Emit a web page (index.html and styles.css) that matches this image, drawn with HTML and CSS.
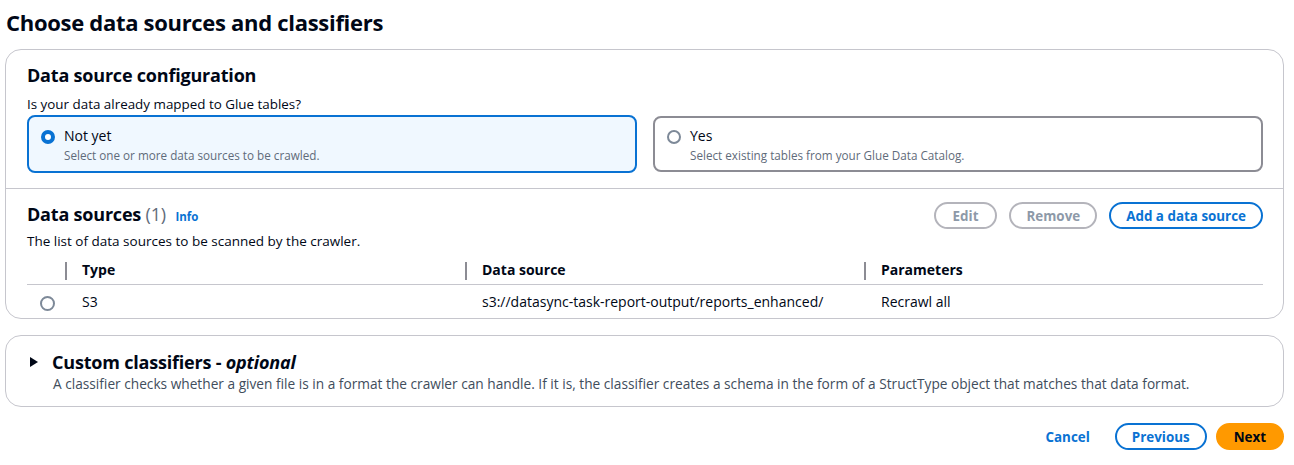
FILE: index.html
```html
<!DOCTYPE html>
<html lang="en">
<head>
  <meta charset="UTF-8" />
  <title>Choose data sources and classifiers</title>
  <link rel="stylesheet" href="styles.css">
</head>
<body>
<div class="page">
  <h1 class="page-title">Choose data sources and classifiers</h1>

  <div class="container">
    <div class="section">
      <h2>Data source configuration</h2>
      <div class="field-label">Is your data already mapped to Glue tables?</div>
      <div class="tiles">
        <div class="tile selected">
          <span class="radio checked"></span>
          <div>
            <div class="tile-title">Not yet</div>
            <div class="tile-desc">Select one or more data sources to be crawled.</div>
          </div>
        </div>
        <div class="tile">
          <span class="radio"></span>
          <div>
            <div class="tile-title">Yes</div>
            <div class="tile-desc">Select existing tables from your Glue Data Catalog.</div>
          </div>
        </div>
      </div>
    </div>

    <div class="section table-section">
      <div class="table-header">
        <h2>Data sources <span class="count">(1)</span> <a class="info">Info</a></h2>
        <div class="actions">
          <button class="btn disabled">Edit</button>
          <button class="btn disabled">Remove</button>
          <button class="btn normal">Add a data source</button>
        </div>
      </div>
      <div class="desc">The list of data sources to be scanned by the crawler.</div>
      <table>
        <thead>
          <tr>
            <th class="col-select"></th>
            <th class="col-type"><span class="sep"></span>Type</th>
            <th class="col-source"><span class="sep"></span>Data source</th>
            <th class="col-params"><span class="sep"></span>Parameters</th>
          </tr>
        </thead>
        <tbody>
          <tr>
            <td class="col-select"><span class="radio"></span></td>
            <td>S3</td>
            <td>s3://datasync-task-report-output/reports_enhanced/</td>
            <td>Recrawl all</td>
          </tr>
        </tbody>
      </table>
    </div>
  </div>

  <div class="container expander">
    <div class="expander-head">
      <span class="caret"></span>
      <h2>Custom classifiers - <i>optional</i></h2>
    </div>
    <div class="expander-desc">A classifier checks whether a given file is in a format the crawler can handle. If it is, the classifier creates a schema in the form of a StructType object that matches that data format.</div>
  </div>

  <div class="footer">
    <button class="link-btn">Cancel</button>
    <button class="btn normal">Previous</button>
    <button class="btn primary">Next</button>
  </div>
</div>
</body>
</html>
```

FILE: styles.css
```css
body {
  margin: 0;
  background-color: #ffffff;
  color: #000716;
  font-family: "Open Sans", "Noto Sans", sans-serif;
  font-size: 14px;
}

.page {
  padding: 6px 10px 0 5px;
}

.page-title {
  font-size: 22px;
  font-weight: 700;
  margin: 0 0 11px 1px;
  line-height: 32px;
  letter-spacing: -0.3px;
}

.container {
  border: 1px solid #c6c6cd;
  border-radius: 16px;
  background-color: #ffffff;
}

.section {
  padding: 13px 20px 16px 21px;
}

.section + .section {
  border-top: 1px solid #c6c6cd;
}

h2 {
  font-size: 18px;
  font-weight: 700;
  margin: 0;
  line-height: 24px;
  letter-spacing: -0.2px;
}

.field-label {
  font-size: 13.4px;
  margin-top: 8px;
  line-height: 18px;
}

.tiles {
  display: grid;
  grid-template-columns: 1fr 1fr;
  gap: 16px;
  margin-top: 2px;
}

.tile {
  display: flex;
  gap: 9px;
  border: 2px solid #8c8c94;
  border-radius: 8px;
  padding: 8px 12px 6px 12px;
  margin-top: 1px;
}

.tile.selected {
  border-color: #0972d3;
  background-color: #f0f8ff;
  margin-top: 0;
  margin-bottom: -1px;
  padding-top: 9px;
  padding-bottom: 7px;
}

.tile-title {
  font-size: 14px;
  line-height: 20px;
}

.tile-desc {
  font-size: 11.7px;
  line-height: 18px;
  color: #5f6b7a;
}

.radio {
  display: inline-block;
  width: 14px;
  height: 14px;
  border: 2px solid #7d8998;
  border-radius: 50%;
  box-sizing: border-box;
  margin-top: 4px;
  flex-shrink: 0;
  background: #fff;
}

.radio.checked {
  border: 4px solid #0972d3;
}

.table-section {
  padding-top: 13px;
  padding-bottom: 1px;
}

.table-header {
  display: flex;
  justify-content: space-between;
  align-items: center;
}

.count {
  color: #5f6b7a;
  font-weight: 400;
}

.info {
  color: #0972d3;
  font-size: 11.5px;
  font-weight: 700;
  margin-left: 5px;
  letter-spacing: 0;
}

.actions {
  display: flex;
  gap: 12px;
}

.btn {
  font-family: inherit;
  font-size: 13.4px;
  font-weight: 700;
  border-radius: 20px;
  border: 2px solid #0972d3;
  background: #ffffff;
  color: #0972d3;
  height: 27px;
  padding: 0 15px;
  line-height: 20px;
}

.btn.disabled {
  border-color: #b4b4bb;
  color: #8d99a8;
}

.actions .btn.disabled:first-child {
  padding: 0 17px;
}

.btn.primary {
  background-color: #ff9900;
  border-color: #ff9900;
  color: #000716;
  padding: 0 16px;
}

.desc {
  font-size: 13.5px;
  line-height: 18px;
  margin-top: 3px;
}

table {
  width: 100%;
  border-collapse: collapse;
  margin-top: 6px;
  font-size: 14px;
}

th {
  text-align: left;
  font-weight: 700;
  height: 28px;
  padding: 0;
  border-bottom: 1px solid #c6c6cd;
}

th .sep {
  display: inline-block;
  width: 2px;
  height: 18px;
  background-color: #8c8c94;
  vertical-align: middle;
  margin-right: 15px;
}

td {
  padding: 0 0 0 17px;
  height: 32px;
}

.col-select,
td.col-select {
  width: 25px;
  padding-left: 13px;
}

.col-select .radio {
  width: 15px;
  height: 15px;
  margin-top: 2px;
  vertical-align: middle;
}

.col-type {
  width: 400px;
}

.col-source {
  width: 399px;
}

.expander {
  margin-top: 16px;
  padding: 14px 20px 13px 21px;
}

.expander-head {
  display: flex;
  align-items: center;
  gap: 14px;
}

.caret {
  width: 0;
  height: 0;
  border-top: 5px solid transparent;
  border-bottom: 5px solid transparent;
  border-left: 8px solid #000716;
  margin-left: 3px;
}

.expander-desc {
  font-size: 13.7px;
  line-height: 18px;
  color: #414d5c;
  margin-left: 26px;
  margin-top: 1px;
}

.footer {
  display: flex;
  justify-content: flex-end;
  align-items: center;
  gap: 9px;
  margin-top: 16px;
}

.link-btn {
  font-family: inherit;
  background: none;
  border: none;
  color: #0972d3;
  font-size: 13.4px;
  font-weight: 700;
  padding: 0 16px;
}
```
